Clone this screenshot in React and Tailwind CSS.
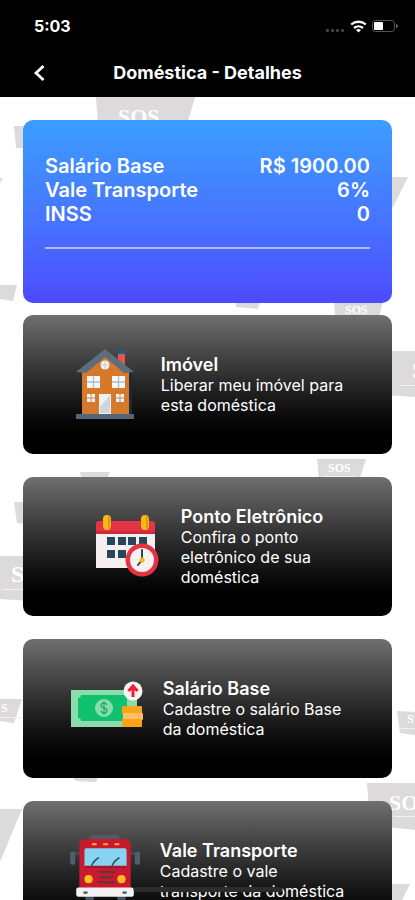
const watermarks = [
  { points: "96,0 195,0 187,28 98,28", text: "SOS", x: 118, y: 27, size: 22 },
  { points: "14,29 30,29 30,51 16,51" },
  { points: "385,80 408,80 393,110 385,110" },
  { points: "0,81 3,81 0,86" },
  { points: "0,188 17,188 13,204 0,202" },
  { points: "236,204 260,204 258,212 236,210" },
  { points: "334,204 383,204 379,220 335,220", text: "SOS", x: 345, y: 217, size: 12 },
  { points: "385,254 415,254 415,300 385,298", text: "S", x: 412, y: 281, size: 24, tag: [399, 288] },
  { points: "317,362 366,362 359,384 319,384", text: "SOS", x: 328, y: 375, size: 12, tag: [322, 379] },
  { points: "80,375 110,375 106,384 82,384" },
  { points: "14,405 30,405 30,427 17,426" },
  { points: "0,459 30,459 30,504 0,502", text: "S", x: 11, y: 485, size: 24, tag: [2, 492] },
  { points: "0,602 22,602 14,626 0,624", text: "S", x: 1, y: 615, size: 12, tag: [0, 620] },
  { points: "72,680 98,680 96,685 76,684" },
  { points: "397,614 415,615 415,638 400,636", text: "S", x: 407, y: 626, size: 12, tag: [401, 631] },
  { points: "367,686 415,686 415,733 370,728", text: "SO", x: 389, y: 713, size: 22, tag: [394, 719] },
  { points: "0,712 22,712 0,765" },
  { points: "385,787 410,787 402,803 385,803" },
];

function Watermarks() {
  return (
    <svg
      className="absolute inset-0 h-full w-full"
      viewBox="0 0 415 803"
      preserveAspectRatio="xMidYMin slice"
      aria-hidden="true"
    >
      {watermarks.map((m) => (
        <g key={m.points}>
          <polygon points={m.points} fill="#dcdadb" />
          {m.text && (
            <text
              x={m.x}
              y={m.y}
              fontSize={m.size}
              fill="#fff"
              className="font-['Liberation_Serif',serif] font-bold"
            >
              {m.text}
            </text>
          )}
          {m.tag && <rect x={m.tag[0]} y={m.tag[1]} width="34" height="1" fill="#f3f2f2" />}
        </g>
      ))}
    </svg>
  );
}

function HouseIcon() {
  return (
    <svg className="size-[72px] shrink-0" viewBox="0 0 72 72" aria-hidden="true">
      <rect x="49" y="4" width="7" height="18" fill="#e2574c" />
      <rect x="48" y="1" width="9" height="4" rx="1" fill="#1d5d84" />
      <path d="M60 23h3v43h-3z" fill="#1c2b36" />
      <path d="M13 66V22L36 4l24 18v44z" fill="#d5792b" />
      <path d="M36 0 65 23l-10 1L36 8 17 24 7 23z" fill="#5d6d7e" />
      <circle cx="36" cy="16" r="4.500" fill="#f3f4f5" />
      <path d="M36 12v8M32 16h8" stroke="#b9c5cc" strokeWidth=".8" />
      {[18, 43].map((x) => (
        <g key={x}>
          <rect x={x} y="27" width="13" height="12" fill="#f4f6f7" />
          <path d={`M${x + 6.5} 27v12M${x} 33h13`} stroke="#aebdc8" strokeWidth="1.300" />
        </g>
      ))}
      {[18, 47].map((x) => (
        <g key={x}>
          <rect x={x} y="45" width="8" height="8" fill="#f1f3f4" />
          <path d={`M${x + 4} 45v8M${x} 49h8`} stroke="#bf8a62" />
        </g>
      ))}
      <rect x="30" y="45" width="12" height="20" fill="#eef0f2" />
      <path d="M31 58 41 46v18H31z" fill="#cfd4df" />
      <rect x="7" y="65" width="58" height="5" fill="#52677a" />
    </svg>
  );
}

function CalendarIcon() {
  const cells = [
    [18, 28], [29, 28], [39, 28], [50, 28], [18, 41], [29, 41],
  ];
  return (
    <svg className="size-[72px] shrink-0" viewBox="0 0 72 72" aria-hidden="true">
      <path d="M7 23h59v34H7z" fill="#f4eeee" />
      <path d="M7 13c0-2 1-3 3-3h53c2 0 3 1 3 3v10H7z" fill="#e33446" />
      <path d="M7 20h59v3H7z" fill="#c92b3d" />
      <rect x="14" y="4" width="8" height="15" rx="4" fill="#fbb815" />
      <rect x="52" y="4" width="8" height="15" rx="4" fill="#fbb815" />
      <path d="M20 6v11M58 6v11" stroke="#e09c0b" strokeWidth="2" strokeLinecap="round" />
      {cells.map(([x, y]) => (
        <rect key={`${x}-${y}`} x={x} y={y - 2} width="8" height="8" fill="#27465a" />
      ))}
      <circle cx="53" cy="49" r="16.500" fill="#e33446" />
      <circle cx="53" cy="49" r="12" fill="#f7f1f0" />
      <path d="M53 49V39M53 49l-4 5" stroke="#27465a" strokeWidth="2" strokeLinecap="round" />
      <circle cx="53" cy="49" r="2.500" fill="#fbb815" />
    </svg>
  );
}

function MoneyIcon() {
  return (
    <svg className="size-[72px] shrink-0" viewBox="0 0 72 72" aria-hidden="true">
      <rect x="0" y="17" width="66" height="37" fill="#8bdcad" />
      <path d="M10 22h46v26H10a3 3 0 0 0-3-3V25a3 3 0 0 0 3-3z" fill="#0fc06d" />
      <circle cx="33" cy="35" r="9" fill="#8bdcad" />
      <path d="M36 32c-.5-1.600-1.600-2-3-2-1.800 0-3 .9-3 2.400 0 3.300 6 1.700 6 5.100 0 1.600-1.300 2.500-3 2.500-1.600 0-2.800-.7-3-2.300M33 28v14" fill="none" stroke="#0fae66" strokeWidth="1.200" />
      <rect x="59" y="28" width="5" height="8" fill="#8bdcad" />
      <rect x="51" y="33" width="20" height="8" rx="1" fill="#fda31a" />
      <rect x="52" y="40" width="20" height="7" rx="1" fill="#ffbf69" />
      <rect x="51" y="46" width="20" height="8" rx="1" fill="#fda31a" />
      <circle cx="62" cy="18" r="9.500" fill="#faf4f3" />
      <path d="M62 24V14M57.500 18l4.500-5 4.500 5" fill="none" stroke="#ef1d3c" strokeWidth="3" />
    </svg>
  );
}

function BusIcon() {
  return (
    <svg className="size-[72px] shrink-0" viewBox="-2 1 70 70" aria-hidden="true">
      <rect x="19" y="1" width="29" height="8" rx="2" fill="#4f5b67" />
      <path d="M9 19H4v4M59 19h5v4" fill="none" stroke="#46525e" strokeWidth="2" />
      <rect x="0" y="17" width="5" height="13" rx="2" fill="#4f5f70" />
      <rect x="63" y="17" width="5" height="13" rx="2" fill="#4f5f70" />
      <path d="M15 59h8v10h-8zM46 59h8v10h-8z" fill="#46525e" />
      <path d="M9 54V12c0-5 3-7 7-7h36c5 0 7 3 7 7v42z" fill="#c9192f" />
      <rect x="14" y="14" width="41" height="19" rx="2" fill="#86d3f4" />
      <path d="M14 31h41v2H14z" fill="#a51627" />
      <path d="M21 31c1-4 3-5 7-8M41 31c1-4 3-5 7-8" fill="none" stroke="#384955" strokeWidth="1.500" />
      {[21, 32, 43].map((x) => (
        <rect key={x} x={x} y="9" width="5" height="2" rx="1" fill="#fdb823" />
      ))}
      <path d="M27 37h17M29 42h13M27 47h17" stroke="#5d3440" strokeWidth="2" />
      <ellipse cx="18" cy="44" rx="4" ry="4" fill="#fdbd20" />
      <ellipse cx="50" cy="44" rx="4" ry="4" fill="#fdbd20" />
      <rect x="6" y="52" width="56" height="9" rx="2" fill="#f3f1f1" />
      <path d="M13 57h4M51 57h4" stroke="#4b5660" strokeWidth="2" />
    </svg>
  );
}

const summary = [
  ["Salário Base", "R$ 1900.00"],
  ["Vale Transporte", "6%"],
  ["INSS", "0"],
];

const actions = [
  { Icon: HouseIcon, title: "Imóvel", lines: ["Liberar meu imóvel para", "esta doméstica"] },
  { Icon: CalendarIcon, title: "Ponto Eletrônico", lines: ["Confira o ponto", "eletrônico de sua", "doméstica"] },
  { Icon: MoneyIcon, title: "Salário Base", lines: ["Cadastre o salário Base", "da doméstica"] },
  { Icon: BusIcon, title: "Vale Transporte", lines: ["Cadastre o vale", "transporte da doméstica"] },
];

function StatusBar() {
  return (
    <div className="flex h-[52px] items-center justify-between pr-4 pl-[34px] text-white">
      <span className="text-[16px] font-bold">5:03</span>
      <svg width="74" height="16" viewBox="0 0 74 16" aria-hidden="true">
        {[1, 6, 11, 16].map((x) => (
          <rect key={x} x={x} y="11" width="3" height="3" rx="1" fill="#444" />
        ))}
        <g fill="none" stroke="#fff" strokeWidth="2.300">
          <path d="M26.200 6.500a11 11 0 0 1 14.600 0" />
          <path d="M29 10a7 7 0 0 1 9 0" />
        </g>
        <path d="M33.500 14.500 31 12a4 4 0 0 1 5 0z" fill="#fff" />
        <rect x="47.500" y="2.500" width="22" height="11" rx="3" fill="none" stroke="#555" />
        <path d="M71 6v4c1.500-.5 2-1.200 2-2s-.5-1.500-2-2z" fill="#666" />
        <rect x="49" y="4" width="9" height="8" rx="1" fill="#fff" />
      </svg>
    </div>
  );
}

export default function App() {
  return (
    <div className="relative flex h-screen flex-col overflow-hidden bg-white font-['Inter',sans-serif]">
      <header className="shrink-0 bg-black">
        <StatusBar />
        <div className="grid h-[45px] grid-cols-[56px_1fr_56px] items-center pb-1 text-white">
          <button type="button" aria-label="Voltar" className="flex justify-end pr-2.5">
            <svg width="14" height="18" viewBox="0 0 14 18" aria-hidden="true">
              <path d="M11.500 2 4 9l7.500 7" fill="none" stroke="#fff" strokeWidth="2.800" />
            </svg>
          </button>
          <h1 className="text-center text-[18px] font-bold whitespace-nowrap">Doméstica - Detalhes</h1>
        </div>
      </header>

      <main className="relative flex-1 overflow-hidden px-[23px] pt-[23px]">
        <Watermarks />
        <section className="relative mb-3 h-[183px] rounded-[10px] bg-linear-to-b from-[#3b9dff] to-[#4d49ff] px-[22px] pt-[34px] text-white">
          <dl className="text-[20px] leading-6 font-semibold">
            {summary.map(([label, value]) => (
              <div key={label} className="flex justify-between">
                <dt>{label}</dt>
                <dd>{value}</dd>
              </div>
            ))}
          </dl>
          <hr className="mt-[21px] border-t-2 border-[#b3b9ff]" />
        </section>

        <div className="relative flex flex-col gap-[23px]">
          {actions.map(({ Icon, title, lines }) => (
            <button
              key={title}
              type="button"
              className="flex h-[139px] shrink-0 items-center justify-center gap-5 rounded-[10px] bg-linear-to-b from-[#707070] to-black pr-[3px] text-left text-white"
            >
              <Icon />
              <span className="text-[16px] leading-5">
                <span className="block text-[18px] leading-5 font-semibold">{title}</span>
                {lines.map((line) => (
                  <span key={line} className="block">
                    {line}
                  </span>
                ))}
              </span>
            </button>
          ))}
        </div>
      </main>

      <div className="absolute bottom-2 left-1/2 h-[5px] w-[149px] -translate-x-1/2 rounded-full bg-[#2c2c2c]" />
    </div>
  );
}
